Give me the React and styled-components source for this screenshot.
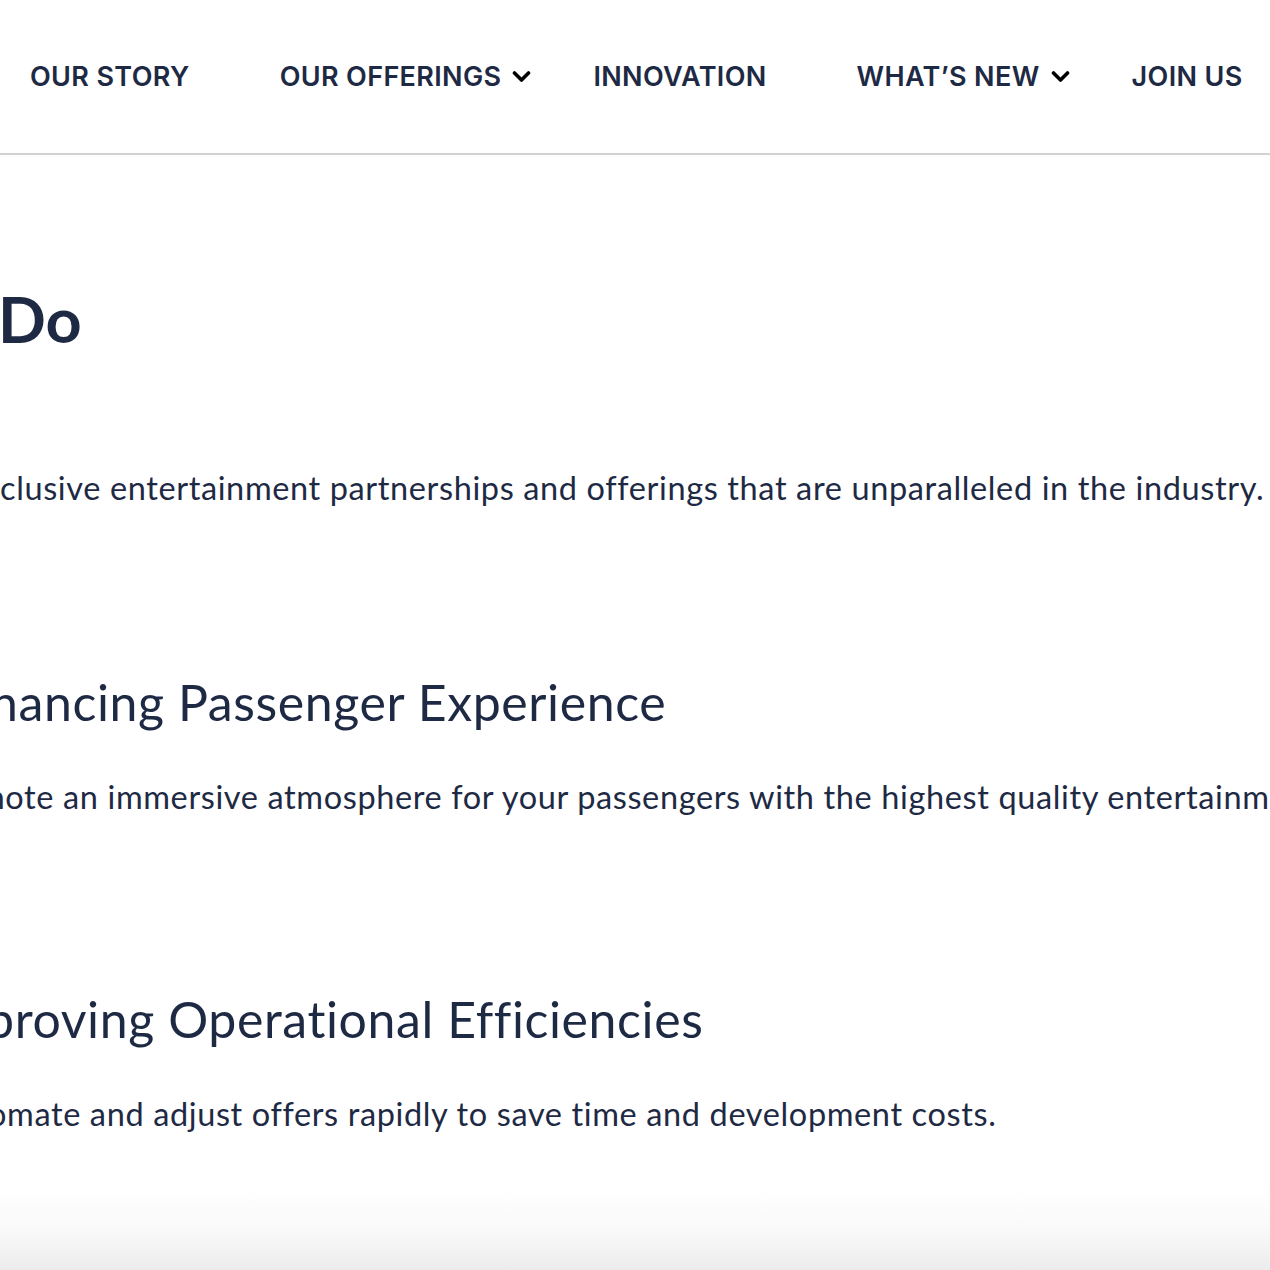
import React from "react";
import styled, { createGlobalStyle } from "styled-components";

const Global = createGlobalStyle`
  html, body { margin: 0; padding: 0; background: #ffffff; overflow: hidden; }
  body { font-family: "Lato", "Open Sans", sans-serif; color: #1e2a44; }
`;

const Page = styled.div`
  width: 1270px;
  height: 1270px;
  display: flex;
  flex-direction: column;
  overflow: hidden;
  background: #fff;
`;

const Header = styled.header`
  height: 155px;
  border-bottom: 2px solid #d2d2d2;
  display: flex;
  align-items: center;
  box-sizing: border-box;
  flex-shrink: 0;
`;

const Nav = styled.nav`
  display: flex;
  align-items: center;
  padding-left: 30px;
  white-space: nowrap;
`;

const NavItem = styled.a`
  display: flex;
  align-items: center;
  margin-right: ${(p) => (p.$menu ? 62 : 90)}px;
  font-family: "Inter", "Lato", sans-serif;
  font-weight: 600;
  font-size: 27px;
  letter-spacing: 0.35px;
  color: #1e2a44;
  text-decoration: none;
  text-transform: uppercase;
`;

const Chevron = styled.svg`
  width: 19px;
  height: 13px;
  margin-left: 11px;
  flex-shrink: 0;
`;

const Main = styled.main`
  flex: 1;
  display: flex;
  flex-direction: column;
  padding-top: 126px;
`;

const Title = styled.h1`
  margin: 0;
  font-family: "Lato", sans-serif;
  font-weight: 700;
  font-size: 63px;
  line-height: 76px;
  color: #1e2a44;
  white-space: nowrap;
  margin-left: ${(p) => p.$shift || 0}px;
`;

const Lead = styled.p`
  margin: 0;
  font-family: "Lato", sans-serif;
  font-weight: 400;
  font-size: 32.5px;
  letter-spacing: 0.62px;
  line-height: 40px;
  color: #1e2a44;
  white-space: nowrap;
  margin-left: ${(p) => p.$shift || 0}px;
`;

const Section = styled.section`
  display: flex;
  flex-direction: column;
  gap: 47px;
`;

const SubTitle = styled.h2`
  margin: 0;
  font-family: "Lato", sans-serif;
  font-weight: 400;
  font-size: 50px;
  letter-spacing: 0.6px;
  line-height: 56px;
  color: #1e2a44;
  white-space: nowrap;
  margin-left: ${(p) => p.$shift || 0}px;
`;

const Intro = styled.div`
  display: flex;
  flex-direction: column;
  gap: 111px;
  margin-bottom: 166px;
`;

const Sections = styled.div`
  display: flex;
  flex-direction: column;
  gap: 174px;
`;

const FooterFade = styled.div`
  margin-top: auto;
  height: 86px;
  background: linear-gradient(to bottom, #ffffff 0%, #fafafa 50%, #ececec 100%);
`;

function Down() {
  return (
    <Chevron viewBox="0 0 19 13" aria-hidden="true">
      <path d="M2.5 3 L9.5 10 L16.5 3" fill="none" stroke="#000" strokeWidth="3.6" strokeLinecap="round" strokeLinejoin="round" />
    </Chevron>
  );
}

const navItems = [
  { label: "Our Story" },
  { label: "Our Offerings", menu: true },
  { label: "Innovation" },
  { label: "What’s New", menu: true },
  { label: "Join Us" },
];

const sections = [
  {
    title: "hancing Passenger Experience",
    titleShift: -10,
    text: "mote an immersive atmosphere for your passengers with the highest quality entertainment.",
    textShift: -22,
  },
  {
    title: "proving Operational Efficiencies",
    titleShift: -14,
    text: "omate and adjust offers rapidly to save time and development costs.",
    textShift: -12,
  },
];

export default function App() {
  return (
    <>
      <Global />
      <Page>
        <Header>
          <Nav>
            {navItems.map((n) => (
              <NavItem key={n.label} href="#" $menu={n.menu}>
                {n.label}
                {n.menu && <Down />}
              </NavItem>
            ))}
          </Nav>
        </Header>
        <Main>
          <Intro>
            <Title $shift={-2}>Do</Title>
            <Lead>clusive entertainment partnerships and offerings that are unparalleled in the industry.</Lead>
          </Intro>
          <Sections>
            {sections.map((s) => (
              <Section key={s.title}>
                <SubTitle $shift={s.titleShift}>{s.title}</SubTitle>
                <Lead $shift={s.textShift}>{s.text}</Lead>
              </Section>
            ))}
          </Sections>
          <FooterFade />
        </Main>
      </Page>
    </>
  );
}
